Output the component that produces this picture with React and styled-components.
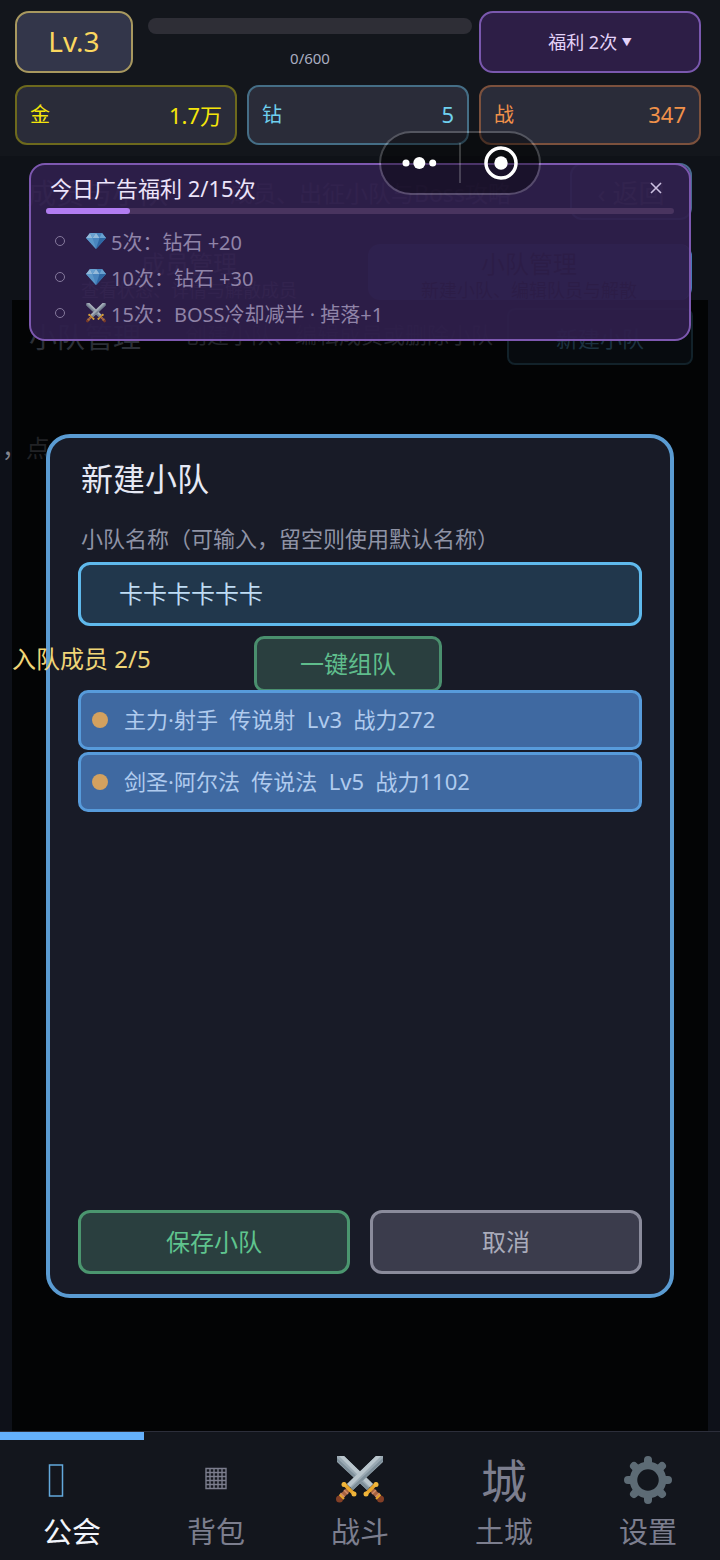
import { useState } from 'react'
import styled, { createGlobalStyle } from 'styled-components'


const GlobalStyle = createGlobalStyle`
    * {
        box-sizing: border-box;
    }
    body {
        margin: 0;
        background: #0e1119;
        font-family: "Noto Sans", "Noto Sans CJK SC", sans-serif;
    }
    button, input {
        font-family: inherit;
        margin: 0;
    }
`;

const stats = [
    { name: '金', value: '1.7万', color: '#f5e60a', border: '#6d691d' },
    { name: '钻', value: '5', color: '#6fd0ee', border: '#456e86' },
    { name: '战', value: '347', color: '#f0914a', border: '#7c513d' },
];

const rewards = [
    { icon: <Gem />, text: '5次：钻石 +20' },
    { icon: <Gem />, text: '10次：钻石 +30' },
    { icon: <Swords size={20} />, text: '15次：BOSS冷却减半 · 掉落+1' },
];

const members = [
    '主力·射手  传说射  Lv3  战力272',
    '剑圣·阿尔法  传说法  Lv5  战力1102',
];

const tabs = [
    { label: '公会', icon: <EmptyGlyph /> },
    { label: '背包', icon: <BagGlyph /> },
    { label: '战斗', icon: <Swords size={48} /> },
    { label: '土城', icon: '城' },
    { label: '设置', icon: <GearGlyph /> },
];

function Gem() {
    return (
        <svg width="20" height="18" viewBox="0 0 20 18">
            <path fill="#4f97d3" d="M4 1h12l4 5-10 11L0 6z" />
            <path fill="#a5d5f3" d="M4 1l2.500 5H0zM10 1l3.500 5h-7z" />
            <path fill="#74b8e8" d="M4 1h6L6.500 6zM16 1l4 5h-6.500z" />
            <path fill="#2f74b5" d="M13.500 6H20L10 17z" />
            <path fill="#63abdf" d="M0 6h6.500L10 17z" />
        </svg>
    );
}

function Swords({ size }) {
    return (
        <svg width={size} height={size} viewBox="0 0 48 48">
            <Sword />
            <g transform="translate(48 0) scale(-1 1)">
                <Sword />
            </g>
        </svg>
    );
}

function Sword() {
    return (
        <>
            <path fill="#9aa9b3" d="M1 0h7l29 28-6 6L1 6z" />
            <path fill="#b9c5cc" d="M8 0l29 28-3 3L3 0z" />
            <path fill="#7e8f9a" d="M1 5l30 29 2-2L1 2z" />
            <path stroke="#a9643f" strokeWidth="5" d="M35 33l8 8" />
            <path stroke="#d08c6a" strokeWidth="1.500" d="M36 38l4-4M39.500 41l4-4" />
            <path stroke="#e8a52c" strokeWidth="3.500" strokeLinecap="round" d="M30 38l10-10" />
            <circle cx="30" cy="38" r="2.500" fill="#f0b53a" />
            <circle cx="40" cy="28.500" r="2.500" fill="#f0b53a" />
            <circle cx="44.500" cy="43" r="3.500" fill="#833f26" />
            <path stroke="#e8a52c" strokeWidth="2" d="M40 43l4.500-4.500" />
        </>
    );
}

// missing-glyph box
function EmptyGlyph() {
    return (
        <svg width="48" height="48" viewBox="0 0 48 48" fill="none" stroke="#63a9dc" strokeWidth="1.5">
            <rect x="1.5" y="9" width="13" height="31" />
        </svg>
    );
}

function BagGlyph() {
    return (
        <svg width="48" height="48" viewBox="0 0 48 48" fill="none" stroke="currentColor" strokeWidth="1.4">
            <path d="M14 12.5h20v20h-20zM18 12.5v20M22 12.5v20M26 12.5v20M30 12.5v20M14 16.5h20M14 20.5h20M14 24.5h20M14 28.5h20" />
        </svg>
    );
}

function GearGlyph() {
    return (
        <svg width="48" height="48" viewBox="0 0 48 48" stroke="#5d6b75" fill="none">
            <circle cx="24" cy="24" r="14.500" strokeWidth="7.500" />
            <path
                strokeWidth="8"
                strokeLinecap="round"
                d="M24 4v4M24 40v4M4 24h4M40 24h4M10 10l3 3M35 35l3 3M10 38l3-3M35 13l3-3"
            />
        </svg>
    );
}

const Header = () => {
    return (
        <TopBar>
            <TopRow>
                <Level>Lv.3</Level>
                <Experience>
                    <ExpTrack />
                    <span>0/600</span>
                </Experience>
                <BenefitButton>福利 2次 <small>▼</small></BenefitButton>
            </TopRow>
            <Stats>
                {stats.map((s) => (
                    <Stat key={s.name} $color={s.color} $border={s.border}>
                        <span>{s.name}</span>
                        <span>{s.value}</span>
                    </Stat>
                ))}
            </Stats>
        </TopBar>
    );
};

const GuildPage = () => {
    return (
        <Guild>
            <GuildTop>
                <GuildTitleRow>
                    <GuildTitle>成员与小队</GuildTitle>
                    <GuildHint>成员、出征小队与Boss攻略</GuildHint>
                    <BackButton>‹ 返回</BackButton>
                </GuildTitleRow>
                <GuildTabs>
                    <GuildTab>
                        成员管理
                        <small>查看状态、详情与解散成员</small>
                    </GuildTab>
                    <GuildTab $active>
                        小队管理
                        <small>新建小队、编辑队员与解散</small>
                    </GuildTab>
                </GuildTabs>
            </GuildTop>
            <SquadList>
                <SquadHead>
                    <h2>小队管理</h2>
                    <p>创建小队、编辑成员或删除小队</p>
                    <NewSquad>新建小队</NewSquad>
                </SquadHead>
                <EmptyText><b>，</b>点</EmptyText>
            </SquadList>
        </Guild>
    );
};

const BenefitPanel = () => {
    return (
        <Panel>
            <PanelHead>
                <h3>今日广告福利 2/15次</h3>
                <CloseButton aria-label="关闭">
                    <svg width="12" height="12" viewBox="0 0 12 12" stroke="#cbbfe0" strokeWidth="1.6">
                        <path d="M1 1l10 10M11 1L1 11" />
                    </svg>
                </CloseButton>
            </PanelHead>
            <Track>
                <Fill style={{ width: `${(2 / 15) * 100}%` }} />
            </Track>
            <RewardList>
                {rewards.map((r) => (
                    <Reward key={r.text}>
                        <Bullet />
                        <RewardIcon>{r.icon}</RewardIcon>
                        {r.text}
                    </Reward>
                ))}
            </RewardList>
        </Panel>
    );
};

const SquadDialog = () => {
    const [name, setName] = useState('卡卡卡卡卡卡');

    return (
        <DialogLayer>
            <Dialog role="dialog" aria-labelledby="dialog-title">
                <DialogTitle id="dialog-title">新建小队</DialogTitle>
                <NameLabel htmlFor="squad-name">小队名称（可输入，留空则使用默认名称）</NameLabel>
                <NameInput id="squad-name" value={name} onChange={(e) => setName(e.target.value)} />
                <MemberHead>
                    <MemberCount>入队成员 2/5</MemberCount>
                    <AutoButton>一键组队</AutoButton>
                </MemberHead>
                <Members>
                    {members.map((m) => (
                        <Member key={m}><span>{m}</span></Member>
                    ))}
                </Members>
                <DialogFooter>
                    <ActionButton $primary>保存小队</ActionButton>
                    <ActionButton>取消</ActionButton>
                </DialogFooter>
            </Dialog>
        </DialogLayer>
    );
};

const App = () => {
    return (
        <Screen>
            <GlobalStyle />
            <Header />
            <GuildPage />
            <BottomNav>
                {tabs.map((t, i) => (
                    <NavItem key={t.label} href="#" $active={i === 0}>
                        <NavIcon>{t.icon}</NavIcon>
                        {t.label}
                    </NavItem>
                ))}
            </BottomNav>
            <SquadDialog />
            <BenefitPanel />
            <Capsule>
                <CapsuleButton aria-label="更多">
                    <svg width="36" height="36" viewBox="0 0 36 36" fill="#fff">
                        <circle cx="4" cy="18" r="3.500" />
                        <circle cx="17.300" cy="18" r="6" />
                        <circle cx="30.700" cy="18" r="3.500" />
                    </svg>
                </CapsuleButton>
                <CapsuleButton aria-label="关闭小程序">
                    <svg width="36" height="36" viewBox="0 0 36 36" fill="none">
                        <circle cx="19" cy="18" r="15" stroke="#fff" strokeWidth="3.500" />
                        <circle cx="19" cy="18" r="6.700" fill="#fff" />
                    </svg>
                </CapsuleButton>
            </Capsule>
        </Screen>
    );
};

const Screen = styled.div`
    position: relative;
    display: flex;
    flex-direction: column;
    min-height: 100vh;
    overflow: hidden;
`;

/* top bar */

const TopBar = styled.header`
    display: flex;
    flex-direction: column;
    gap: 12px;
    padding: 11px 19px 11px 15px;
    background: #13161c;
`;

const TopRow = styled.div`
    display: flex;
    height: 62px;
`;

const Level = styled.div`
    display: flex;
    align-items: center;
    justify-content: center;
    width: 118px;
    padding-bottom: 2px;
    border: 2px solid #a8985f;
    border-radius: 14px;
    background: #33364a;
    color: #fbd75f;
    font-size: 28px;
`;

const Experience = styled.div`
    display: flex;
    flex: 1;
    flex-direction: column;
    align-items: center;
    gap: 12px;
    padding: 7px 7px 0 15px;
    color: #a9adc0;
    font-size: 15px;
    line-height: 24px;
`;

const ExpTrack = styled.div`
    width: 100%;
    height: 16px;
    border-radius: 8px;
    background: #2e2e36;
`;

const BenefitButton = styled.button`
    width: 222px;
    padding: 0 0 3px;
    border: 2px solid #7a58ae;
    border-radius: 14px;
    background: #2d1e46;
    color: #e3d2f8;
    font-size: 18px;

    small {
        font-size: 10px;
        vertical-align: 3px;
    }
`;

const Stats = styled.div`
    display: grid;
    grid-template-columns: repeat(3, 1fr);
    gap: 10px;
`;

const Stat = styled.div`
    display: flex;
    align-items: center;
    justify-content: space-between;
    height: 60px;
    padding: 0 13px 3px;
    border: 2px solid ${(p) => p.$border};
    border-radius: 12px;
    background: #2a2c39;
    color: ${(p) => p.$color};
    font-size: 22px;

    span:first-child {
        font-size: 20px;
    }
`;

/* dimmed guild page */

const Guild = styled.main`
    display: flex;
    flex: 1;
    flex-direction: column;
`;

const GuildTop = styled.div`
    display: flex;
    flex-direction: column;
    gap: 24px;
    height: 144px;
    padding: 7px 28px 0;
    background: #0f1218;
`;

const GuildTitleRow = styled.div`
    display: flex;
    align-items: center;
    height: 57px;
    white-space: nowrap;
`;

const GuildTitle = styled.h1`
    width: 202px;
    margin: 0;
    color: #6a6d76;
    font-size: 28px;
    font-weight: 400;
`;

const GuildHint = styled.p`
    flex: 1;
    margin: 0;
    color: #5c5e6a;
    font-size: 23px;
`;

const BackButton = styled.button`
    width: 122px;
    height: 57px;
    border: 2px solid #4a6a90;
    border-radius: 12px;
    background: #1b2130;
    color: #6c6f7a;
    font-size: 26px;
`;

const GuildTabs = styled.div`
    display: grid;
    grid-template-columns: 1fr 1fr;
    gap: 16px;
`;

const GuildTab = styled.button`
    display: flex;
    flex-direction: column;
    align-items: center;
    height: 56px;
    padding: 4px 0 0;
    border: 0;
    border-right: 2px solid ${(p) => (p.$active ? '#4a7ab8' : 'transparent')};
    border-radius: 12px;
    background: ${(p) => (p.$active ? '#2c4876' : 'transparent')};
    color: ${(p) => (p.$active ? '#060608' : '#6a6874')};
    font-size: 24px;
    line-height: 32px;

    small {
        font-size: 18px;
        line-height: 20px;
    }
`;

const SquadList = styled.section`
    display: flex;
    flex: 1;
    flex-direction: column;
    margin: 0 12px;
    background: #030405;
`;

const SquadHead = styled.div`
    display: flex;
    align-items: center;
    height: 65px;
    margin-left: 17px;
    padding-right: 15px;
    color: #2c3038;
    white-space: nowrap;

    h2 {
        width: 156px;
        margin: 0;
        padding-top: 6px;
        font-size: 28px;
        font-weight: 400;
    }

    p {
        flex: 1;
        margin: 0;
        color: #222429;
        font-size: 22px;
    }
`;

const NewSquad = styled.button`
    align-self: flex-end;
    width: 186px;
    height: 57px;
    border: 2px solid #12222a;
    border-radius: 8px;
    background: #070b0f;
    color: #1c3240;
    font-size: 22px;
`;

const EmptyText = styled.p`
    margin: 64px 0 0 -10px;
    color: #212225;
    font-size: 24px;

    b {
        color: #84858f;
        font-weight: 400;
    }
`;

/* bottom navigation */

const BottomNav = styled.nav`
    display: grid;
    grid-template-columns: repeat(5, 1fr);
    height: 129px;
    border-top: 1px solid #2c2e3a;
    background: #13161d;
`;

const NavItem = styled.a`
    display: flex;
    flex-direction: column;
    align-items: center;
    gap: 8px;
    padding-top: 16px;
    border-top: 8px solid ${(p) => (p.$active ? '#64b0fb' : 'transparent')};
    color: ${(p) => (p.$active ? '#f2f5fb' : '#7c7e8e')};
    font-size: 29px;
    line-height: 40px;
    text-decoration: none;
`;

const NavIcon = styled.span`
    display: flex;
    align-items: center;
    justify-content: center;
    height: 48px;
    color: #7c7e8e;
    font-size: 46px;
    line-height: 48px;
`;

/* benefit panel */

const Panel = styled.aside`
    position: absolute;
    top: 163px;
    right: 29px;
    left: 29px;
    height: 178px;
    padding: 8px 15px;
    border: 2px solid #7d58b0;
    border-radius: 16px;
    background: rgba(47, 31, 75, 0.94);
`;

const PanelHead = styled.div`
    display: flex;
    align-items: center;
    justify-content: space-between;
    height: 35px;
    padding: 0 6px 5px 4px;

    h3 {
        margin: 0;
        color: #ece4fa;
        font-size: 22px;
        font-weight: 400;
        line-height: 30px;
    }
`;

const CloseButton = styled.button`
    display: flex;
    align-items: center;
    justify-content: center;
    width: 24px;
    height: 30px;
    padding: 0;
    border: 0;
    background: none;
`;

const Track = styled.div`
    height: 6px;
    border-radius: 3px;
    background: #49345f;
`;

const Fill = styled.div`
    height: 6px;
    border-radius: 3px;
    background: #b27df2;
`;

const RewardList = styled.ul`
    margin: 9px 0 0;
    padding: 0;
    list-style: none;
`;

const Reward = styled.li`
    display: flex;
    align-items: center;
    height: 36px;
    padding-left: 9px;
    color: #9084a8;
    font-size: 20px;
    white-space: nowrap;
`;

const Bullet = styled.span`
    width: 10px;
    height: 10px;
    margin-right: 21px;
    border: 1px solid #85799c;
    border-radius: 50%;
`;

const RewardIcon = styled.span`
    display: flex;
    width: 25px;
    opacity: 0.85;
`;

/* mini program capsule */

const Capsule = styled.div`
    position: absolute;
    top: 131px;
    right: 179px;
    display: flex;
    width: 162px;
    height: 64px;
    padding: 10px 0;
    border: 2px solid rgba(255, 255, 255, 0.2);
    border-radius: 32px;
    background: rgba(0, 0, 0, 0.4);
    background-clip: padding-box;
`;

const CapsuleButton = styled.button`
    display: flex;
    flex: 1;
    align-items: center;
    justify-content: center;
    padding: 0;
    border: 0;
    background: none;

    & + & {
        border-left: 2px solid rgba(255, 255, 255, 0.2);
    }
`;

/* new squad dialog */

const DialogLayer = styled.div`
    position: absolute;
    inset: 434px 46px 262px;
    display: flex;
`;

const Dialog = styled.section`
    display: flex;
    flex: 1;
    flex-direction: column;
    padding: 20px 28px;
    border: 4px solid #5a9bd2;
    border-radius: 24px;
    background: #181b27;
`;

const DialogTitle = styled.h2`
    margin: 0;
    padding-left: 3px;
    color: #e6e9f4;
    font-size: 32px;
    font-weight: 400;
    line-height: 42px;
`;

const NameLabel = styled.label`
    margin-top: 20px;
    padding-left: 3px;
    color: #8f93a5;
    font-size: 22px;
    line-height: 36px;
`;

const NameInput = styled.input`
    width: 100%;
    height: 64px;
    margin-top: 6px;
    padding: 0 38px 4px;
    border: 3px solid #5fb9ec;
    border-radius: 12px;
    outline: 0;
    background: #21374c;
    color: #bfdcf4;
    font-size: 24px;
`;

const MemberHead = styled.div`
    display: flex;
    align-items: flex-start;
    margin-top: 10px;
    margin-left: -66px;
`;

const MemberCount = styled.span`
    width: 242px;
    color: #efd577;
    font-size: 24px;
    line-height: 46px;
`;

const AutoButton = styled.button`
    width: 188px;
    height: 56px;
    padding: 0 0 4px;
    border: 3px solid #4a8f6e;
    border-radius: 10px;
    background: #2a3f3f;
    color: #5fbd8c;
    font-size: 24px;
`;

const Members = styled.ul`
    display: flex;
    flex-direction: column;
    gap: 2px;
    margin: -2px 0 0;
    padding: 0;
    list-style: none;
`;

const Member = styled.li`
    display: flex;
    align-items: center;
    gap: 16px;
    height: 60px;
    padding: 0 11px;
    border: 3px solid #579bdb;
    border-radius: 10px;
    background: #3f69a1;
    color: #b0cbee;
    font-size: 22px;
    white-space: pre;

    &::before {
        content: '';
        width: 16px;
        height: 16px;
        border-radius: 50%;
        background: #d3a15f;
    }

    span {
        padding-bottom: 4px;
    }
`;

const DialogFooter = styled.div`
    display: grid;
    grid-template-columns: 1fr 1fr;
    gap: 20px;
    margin-top: auto;
`;

const ActionButton = styled.button`
    height: 64px;
    padding: 0 0 4px;
    border: 3px solid ${(p) => (p.$primary ? '#4b966f' : '#8a8b9b')};
    border-radius: 12px;
    background: ${(p) => (p.$primary ? '#2a3f3f' : '#3b3c4c')};
    color: ${(p) => (p.$primary ? '#5fc48e' : '#a9abba')};
    font-size: 24px;
`;

export default App;
